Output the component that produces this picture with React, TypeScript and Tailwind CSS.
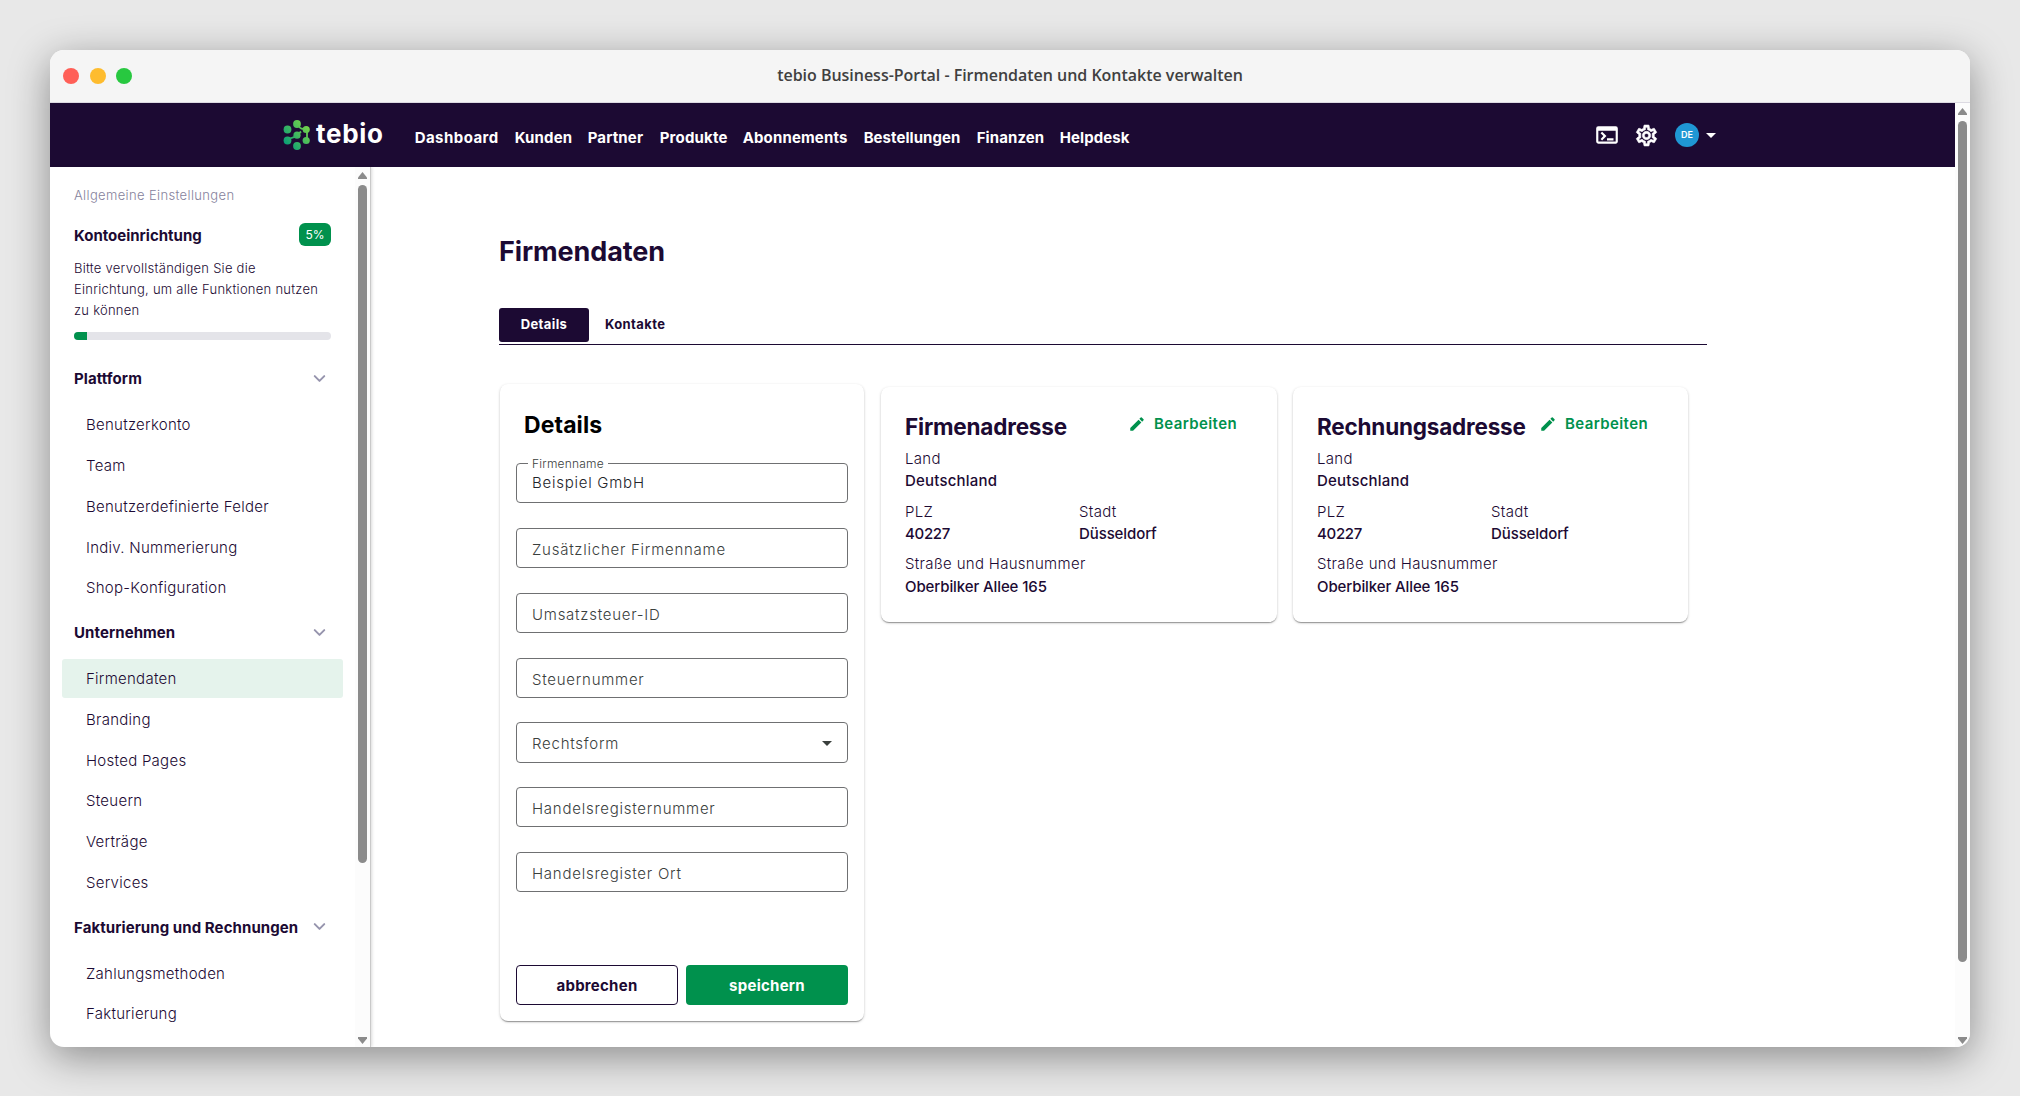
import { ChevronDown } from "lucide-react";
import { MdEdit, MdOutlineSettings, MdOutlineTerminal } from "react-icons/md";

const NAV = [
  { label: "Dashboard", style: "w-[84px] tracking-[0.45px]" },
  { label: "Kunden", style: "w-[57px] tracking-[0.15px]" },
  { label: "Partner", style: "w-[56px] tracking-[0.15px]" },
  { label: "Produkte", style: "w-[67px] tracking-[0.2px]" },
  { label: "Abonnements", style: "w-[105px] tracking-[0.15px]" },
  { label: "Bestellungen", style: "w-[97px] tracking-[0.05px]" },
  { label: "Finanzen", style: "w-[67px] tracking-[0.1px]" },
  { label: "Helpdesk", style: "w-[70px] tracking-[0.1px]" },
];

const GROUPS = [
  {
    title: "Plattform",
    items: [
      "Benutzerkonto",
      "Team",
      "Benutzerdefinierte Felder",
      "Indiv. Nummerierung",
      "Shop-Konfiguration",
    ],
  },
  {
    title: "Unternehmen",
    items: ["Firmendaten", "Branding", "Hosted Pages", "Steuern", "Verträge", "Services"],
  },
  {
    title: "Fakturierung und Rechnungen",
    items: ["Zahlungsmethoden", "Fakturierung"],
  },
];

const FIELDS = [
  { label: "Firmenname", value: "Beispiel GmbH" },
  { label: "Zusätzlicher Firmenname" },
  { label: "Umsatzsteuer-ID" },
  { label: "Steuernummer" },
  { label: "Rechtsform", select: true },
  { label: "Handelsregisternummer" },
  { label: "Handelsregister Ort" },
];

const CARD =
  "rounded-[8px] bg-white shadow-[0_2px_1px_-1px_rgba(0,0,0,0.2),0_1px_1px_rgba(0,0,0,0.14),0_1px_3px_rgba(0,0,0,0.2)]";

function Logo() {
  return (
    <div className="flex items-center">
      <svg viewBox="0 0 27 30" className="h-[30px] w-[27px]">
        <defs>
          <linearGradient id="leaf" gradientUnits="userSpaceOnUse" x1="2" y1="24" x2="25" y2="6">
            <stop offset="0" stopColor="#0a9f76" />
            <stop offset="1" stopColor="#74d04a" />
          </linearGradient>
        </defs>
        <g fill="url(#leaf)">
          <circle cx="14" cy="4" r="3.9" />
          <circle cx="4.5" cy="9.5" r="3.9" />
          <circle cx="23.2" cy="9.5" r="3.6" />
          <circle cx="14" cy="15.2" r="3.6" />
          <circle cx="4.5" cy="20.5" r="3.9" />
          <circle cx="23.2" cy="20.5" r="3.6" />
          <circle cx="14" cy="26" r="3.9" />
        </g>
        <g stroke="url(#leaf)" strokeWidth="1.8" fill="none">
          <path d="M15.5 5.5C17 9 19.5 9 22.5 9M24 10V20" />
          <path d="M4.5 19.5C8.5 17 10.5 18 13.5 16L18 11.5" />
        </g>
      </svg>
      <span className="mb-[2px] ml-[6px] text-[26px] leading-none font-bold tracking-[0.7px]">
        tebio
      </span>
    </div>
  );
}

function Scrollbar({ thumb }: { thumb: string }) {
  return (
    <div className="flex w-[15px] shrink-0 flex-col items-center bg-[#fcfcfc] pt-[5px] pb-[3px]">
      <svg viewBox="0 0 9 7" className="h-[7px] w-[9px] fill-[#8b8b8b]">
        <path d="M4.5 0L9 5.5V7H0V5.5Z" />
      </svg>
      <div className={`mt-[6px] w-[9px] rounded-full bg-[#8b8b8b] ${thumb}`} />
      <svg viewBox="0 0 9 7" className="mt-auto h-[7px] w-[9px] fill-[#8b8b8b]">
        <path d="M4.5 7L9 1.5V0H0V1.5Z" />
      </svg>
    </div>
  );
}

function Sidebar() {
  return (
    <aside className="flex w-[321px] shrink-0 overflow-hidden border-r border-[#c9c9c9] shadow-[1px_0_3px_rgba(0,0,0,0.15)]">
      <div className="flex-1 pl-3">
        <div className="px-3 pt-[18px]">
          <p className="text-[13px] leading-5 font-light tracking-[0.36px] text-[#85829c]">
            Allgemeine Einstellungen
          </p>
          <div className="mt-[17px] flex h-[24px] w-[257px] items-center justify-between">
            <h2 className="pt-[5px] text-[15px] font-bold">Kontoeinrichtung</h2>
            <span className="flex h-[23px] w-8 items-center justify-center rounded-[6px] bg-[#00914d] pt-px text-[12px] text-white">
              5%
            </span>
          </div>
          <p className="mt-[12px] text-[13px] leading-[21px] font-light tracking-[0.26px]">
            Bitte vervollständigen Sie die
            <br />
            Einrichtung, um alle Funktionen nutzen
            <br />
            zu können
          </p>
          <div className="mt-[11px] h-2 w-[257px] overflow-hidden rounded-full bg-[#e4e4e9]">
            <div className="h-full w-[5%] bg-[#00914d]" />
          </div>
        </div>
        <nav className="mt-[15px] w-[281px]">
          {GROUPS.map((group) => (
            <section key={group.title}>
              <div className="flex h-[50px] items-center justify-between pr-[14px] pb-px pl-3">
                <h3 className="text-[15px] font-bold tracking-[0.08px]">{group.title}</h3>
                <ChevronDown size={19} strokeWidth={2.5} className="mb-[2px] text-[#9694ad]" />
              </div>
              {group.items.map((item) => (
                <div
                  key={item}
                  className={`mb-[1.75px] flex h-[39px] items-center rounded-[3px] px-6 pt-[2px] text-[15px] font-light tracking-[0.27px] ${
                    item === "Firmendaten" ? "bg-[#e5f3ec]" : ""
                  }`}
                >
                  {item}
                </div>
              ))}
            </section>
          ))}
        </nav>
      </div>
      <Scrollbar thumb="h-[678px]" />
    </aside>
  );
}

function Field({ label, value, select }: { label: string; value?: string; select?: boolean }) {
  return (
    <div
      className={`relative flex items-center justify-between rounded-[4px] border border-[#6f7072] px-[15px] text-[15px] font-light tracking-[0.75px] text-[#3a403d] ${
        select ? "-my-px h-[41px]" : "h-10"
      }`}
    >
      {value ? (
        <>
          <span className="absolute -top-[9px] left-[11px] bg-white px-1 text-[12px] leading-[18px] tracking-[0.2px]">
            {label}
          </span>
          <span className="text-[#22242a]">{value}</span>
        </>
      ) : (
        <span className="pt-[4px]">{label}</span>
      )}
      {select && (
        <svg viewBox="0 0 10 5" className="mt-[2px] h-[5px] w-[10px] fill-current">
          <path d="M0 0H10L5 5Z" />
        </svg>
      )}
    </div>
  );
}

function AddressCard({ title, width }: { title: string; width: string }) {
  return (
    <section className={`mt-[3px] h-[235px] px-[24px] pt-[26px] ${CARD} ${width}`}>
      <div className="flex h-[35px] justify-between pr-4">
        <h2 className="text-[22.5px] leading-[28px] font-bold tracking-[-0.2px]">{title}</h2>
        <button className="flex h-[22px] items-center text-[15px] font-semibold tracking-[0.4px] text-[#00914d]">
          <MdEdit size={18} className="mr-[8px]" />
          Bearbeiten
        </button>
      </div>
      <div className="text-[15px] leading-[22.3px] font-light tracking-[0.3px]">
        <p>Land</p>
        <p className="font-medium tracking-[0.2px]">Deutschland</p>
        <div className="mt-2 flex">
          <div className="w-[174px]">
            <p>PLZ</p>
            <p className="font-medium tracking-[-0.3px]">40227</p>
          </div>
          <div>
            <p>Stadt</p>
            <p className="font-medium tracking-[-0.1px]">Düsseldorf</p>
          </div>
        </div>
        <p className="mt-2">Straße und Hausnummer</p>
        <p className="pt-px font-medium tracking-[-0.1px]">Oberbilker Allee 165</p>
      </div>
    </section>
  );
}

export default function App() {
  return (
    <div className="h-[1096px] w-[2020px] overflow-hidden bg-[#e8e8e8] p-[50px] font-['Inter',sans-serif] text-[#1c0a33]">
      <div className="flex h-[997px] w-[1920px] flex-col overflow-hidden rounded-[14px] bg-white shadow-[0_10px_40px_rgba(0,0,0,0.4)]">
        <header className="grid h-[53px] shrink-0 grid-cols-[1fr_auto_1fr] items-center border-b border-[#dcdae2] bg-[#f5f5f5]">
          <div className="flex gap-[10.5px] pl-[13px]">
            <span className="size-[16px] rounded-full bg-[#ff5f57]" />
            <span className="size-[16px] rounded-full bg-[#febc2e]" />
            <span className="size-[16px] rounded-full bg-[#28c840]" />
          </div>
          <h1 className="pb-[2px] font-['Open_Sans',sans-serif] text-[16px] font-semibold tracking-[-0.02px] text-[#404040]">
            tebio Business-Portal - Firmendaten und Kontakte verwalten
          </h1>
        </header>

        <div className="flex min-h-0 flex-1">
          <div className="flex min-w-0 flex-1 flex-col">
            <div className="flex h-16 shrink-0 items-center bg-[#1c0a33] pr-[239px] pl-[233px] text-white">
              <Logo />
              <nav className="ml-[31px] flex gap-4 pt-[7px] text-[15px] font-bold">
                {NAV.map((item) => (
                  <span key={item.label} className={item.style}>
                    {item.label}
                  </span>
                ))}
              </nav>
              <div className="ml-auto flex items-center">
                <MdOutlineTerminal size={26} />
                <MdOutlineSettings
                  size={25}
                  className="ml-[14px] [&>path:last-child]:stroke-white [&>path:last-child]:stroke-[0.6]"
                />
                <span className="ml-4 flex size-6 items-center justify-center rounded-full bg-[#1f97d4] text-[9px] font-semibold">
                  DE
                </span>
                <svg viewBox="0 0 10 5" className="ml-[7px] h-[5px] w-[10px] fill-white">
                  <path d="M0 0H10L5 5Z" />
                </svg>
              </div>
            </div>

            <div className="flex min-h-0 flex-1">
              <Sidebar />
              <main className="flex-1 pt-[66px] pl-[128px]">
                <h2 className="text-[27px] leading-[38px] font-bold tracking-[-0.1px]">
                  Firmendaten
                </h2>
                <div className="mt-[37px] flex h-[37px] w-[1208px] border-b border-[#1c0a33] text-[13px] font-bold tracking-[0.4px]">
                  <div className="flex h-[34px] w-[90px] items-center justify-center rounded-[3px] bg-[#1c0a33] text-white">
                    Details
                  </div>
                  <div className="flex h-[34px] items-center pl-[16px]">Kontakte</div>
                </div>

                <div className="mt-[39px] ml-px flex items-start">
                  <section className={`h-[637px] w-[364px] px-4 pt-[26px] ${CARD}`}>
                    <h2 className="pl-[8px] text-[23px] leading-[30px] font-bold tracking-[0.1px] text-black">
                      Details
                    </h2>
                    <div className="mt-[23px] flex flex-col gap-[25px]">
                      {FIELDS.map((field) => (
                        <Field key={field.label} {...field} />
                      ))}
                    </div>
                    <div className="mt-[73px] grid grid-cols-2 gap-2 text-[15px] font-bold tracking-[0.25px]">
                      <button className="h-10 rounded-[4px] border border-[#1c0a33] pt-[2px]">
                        abbrechen
                      </button>
                      <button className="h-10 rounded-[4px] bg-[#00914d] pt-[2px] text-white">
                        speichern
                      </button>
                    </div>
                  </section>
                  <div className="ml-[17px] flex gap-4">
                    <AddressCard title="Firmenadresse" width="w-[396px]" />
                    <AddressCard title="Rechnungsadresse" width="w-[395px]" />
                  </div>
                </div>
              </main>
            </div>
          </div>
          <Scrollbar thumb="h-[841px]" />
        </div>
      </div>
    </div>
  );
}
